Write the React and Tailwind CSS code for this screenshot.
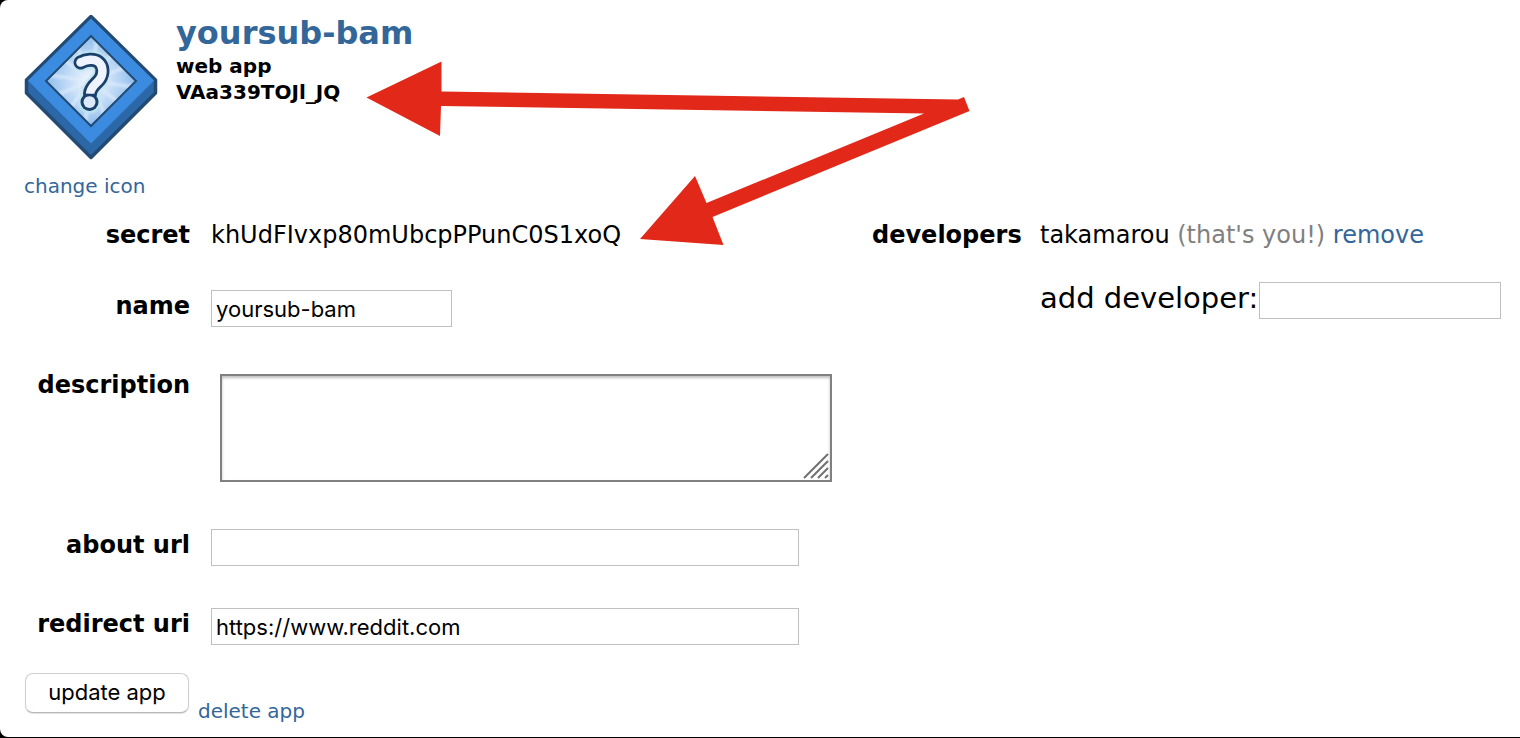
import React from "react";

const linkClass = "text-[#336699] hover:underline";
const fieldClass =
  "block h-[37px] border border-[#c0c0c0] bg-white px-1 font-['Inter',sans-serif] text-[22px] text-black outline-none";
const labelClass =
  "w-[166px] shrink-0 text-right text-[24px] leading-8 font-bold";

function AppIcon() {
  const rays = Array.from({ length: 12 }, (_, i) => i * 30 + 8);
  const mark =
    "M56.500 48.500C62 45.500 70 44.500 74.500 48C79.500 52 79.500 59.500 76 65C72.500 70 66.500 72.500 66 80";
  return (
    <svg viewBox="0 0 134 146" className="h-[146px] w-[134px]" aria-hidden="true">
      <defs>
        <radialGradient id="glass">
          <stop offset="0" stopColor="#f4f8ff" />
          <stop offset="0.45" stopColor="#c9dff7" />
          <stop offset="1" stopColor="#8dbcec" />
        </radialGradient>
        <filter id="soft" x="-20%" y="-20%" width="140%" height="140%">
          <feGaussianBlur stdDeviation="1" />
        </filter>
        <clipPath id="pane">
          <path d="M67 22 L112 67 L67 112 L22 67Z" />
        </clipPath>
      </defs>
      <path d="M67 2.500 L131.500 66 V79 L67 143.500 L2.500 79 V66Z" fill="#2c68a8" stroke="#224a73" strokeWidth="3.500" strokeLinejoin="round" />
      <path d="M67 4.500 L130 66.500 L67 129.500 L4 66.500Z" fill="#3b8ce0" />
      <path d="M67 22 L112 67 L67 112 L22 67Z" fill="url(#glass)" />
      <g clipPath="url(#pane)">
        <g filter="url(#soft)">
          {rays.map((angle) => (
            <path
              key={angle}
              d="M67 67 L64 20 L70 20Z"
              fill="#eef6ff"
              opacity="0.5"
              transform={`rotate(${angle} 67 67)`}
            />
          ))}
        </g>
      </g>
      <path d="M67 22 L112 67 L67 112 L22 67Z" fill="none" stroke="#224a73" strokeWidth="2" />
      <g fill="none" strokeLinejoin="round">
        <g filter="url(#soft)" strokeLinecap="round">
          <path d={mark} stroke="#bfe6f0" strokeWidth="18" />
          <circle cx="65.500" cy="88" r="11" fill="#bfe6f0" />
        </g>
        <path d={mark} stroke="#1c406c" strokeWidth="14" strokeLinecap="round" />
        <circle cx="65.500" cy="88" r="9" fill="#1c406c" />
        <path d={mark} stroke="#eef3fd" strokeWidth="8.500" />
        <circle cx="56.500" cy="48.500" r="4.250" fill="#eef3fd" />
        <circle cx="65.500" cy="88" r="6" fill="#dce9fb" />
        <path d="M61 81 H71" stroke="#1c406c" strokeWidth="2.500" />
      </g>
    </svg>
  );
}

function Arrows() {
  return (
    <svg
      viewBox="0 0 610 190"
      className="pointer-events-none absolute top-[60px] left-[365px] h-[190px] w-[610px]"
      fill="#e12819"
      aria-hidden="true"
    >
      <path d="M1.500 37.500 L76.500 1.500 L76.500 31.500 L593 39.500 L599 37 L604.500 51 L347.500 157 L358.500 185 L275 179 L330 116 L341.500 143 L559 53.500 L76 46 L75 76Z" />
    </svg>
  );
}

export default function App() {
  return (
    <div className="bg-black pb-px font-['DejaVu_Sans',Verdana,sans-serif] text-black">
      <main className="relative rounded-l-[8px] bg-white pt-[13px] pr-[19px] pb-[14px] pl-6">
        <header className="flex gap-[18px]">
          <div>
            <div className="pt-px">
              <AppIcon />
            </div>
            <a href="#icon" className={`mt-[14px] block text-[20px] leading-6 whitespace-nowrap ${linkClass}`}>
              change icon
            </a>
          </div>
          <div className="text-[20px] leading-[26px] font-bold">
            <h1 className="text-[32px] leading-10">
              <a href="#app" className={linkClass}>yoursub-bam</a>
            </h1>
            <p>web app</p>
            <p>VAa339TOJl_JQ</p>
          </div>
        </header>

        <form onSubmit={(e) => e.preventDefault()}>
          <div className="mt-[21px] flex items-start gap-10">
            <div className="min-w-0 flex-1">
              <div className="flex gap-[21px]">
                <span className={labelClass}>secret</span>
                <span className="text-[24px] leading-8">khUdFIvxp80mUbcpPPunC0S1xoQ</span>
              </div>
              <div className="mt-[39px] flex gap-[21px]">
                <label htmlFor="name" className={labelClass}>name</label>
                <input id="name" type="text" defaultValue="yoursub-bam" className={`w-[241px] ${fieldClass}`} />
              </div>
              <div className="mt-[42px] flex gap-[30px]">
                <label htmlFor="description" className={labelClass}>description</label>
                <div className="relative mt-[5px] flex-1">
                  <textarea
                    id="description"
                    className="block h-[108px] w-full resize-none border-2 border-[#808080] bg-white p-1 text-[22px] shadow-[inset_0_2px_3px_rgba(0,0,0,0.25)] outline-none"
                  />
                  <svg
                    viewBox="0 0 26 26"
                    className="pointer-events-none absolute right-[3px] bottom-[3px] size-[26px]"
                    stroke="#707070"
                    strokeWidth="2"
                    aria-hidden="true"
                  >
                    <path d="M1 25 L25 1 M8 25 L25 8 M15 25 L25 15 M22 25 L25 22" />
                  </svg>
                </div>
              </div>
              <div className="mt-[47px] flex gap-[21px] pr-[33px]">
                <label htmlFor="about" className={labelClass}>about url</label>
                <input id="about" type="text" className={`min-w-0 flex-1 ${fieldClass}`} />
              </div>
              <div className="mt-[42px] flex gap-[21px] pr-[33px]">
                <label htmlFor="redirect" className={labelClass}>redirect uri</label>
                <input id="redirect" type="text" defaultValue="https://www.reddit.com" className={`min-w-0 flex-1 ${fieldClass}`} />
              </div>
            </div>

            <section className="flex shrink-0 gap-5">
              <h2 className="w-[148px] text-right text-[24px] leading-8 font-bold">developers</h2>
              <div>
                <p className="text-[24px] leading-8 whitespace-nowrap">
                  takamarou <span className="text-[#808080]">(that's you!)</span>{" "}
                  <a href="#remove" className={linkClass}>remove</a>
                </p>
                <div className="mt-[31px] flex w-[461px] justify-between">
                  <label htmlFor="developer" className="text-[29px] leading-8 whitespace-nowrap">add developer:</label>
                  <input id="developer" type="text" className={`w-[242px] ${fieldClass}`} />
                </div>
              </div>
            </section>
          </div>

          <div className="mt-7 flex items-start gap-[9px] pl-px">
            <button
              type="submit"
              className="h-10 w-[164px] rounded-[8px] border border-[#cfcfcf] border-b-[#b8b8b8] bg-white pb-px font-['Inter',sans-serif] text-[22px] shadow-[0_1px_1px_rgba(0,0,0,0.12)]"
            >
              update app
            </button>
            <a href="#delete" className={`mt-[26px] text-[20px] leading-6 ${linkClass}`}>delete app</a>
          </div>
        </form>

        <Arrows />
      </main>
    </div>
  );
}
